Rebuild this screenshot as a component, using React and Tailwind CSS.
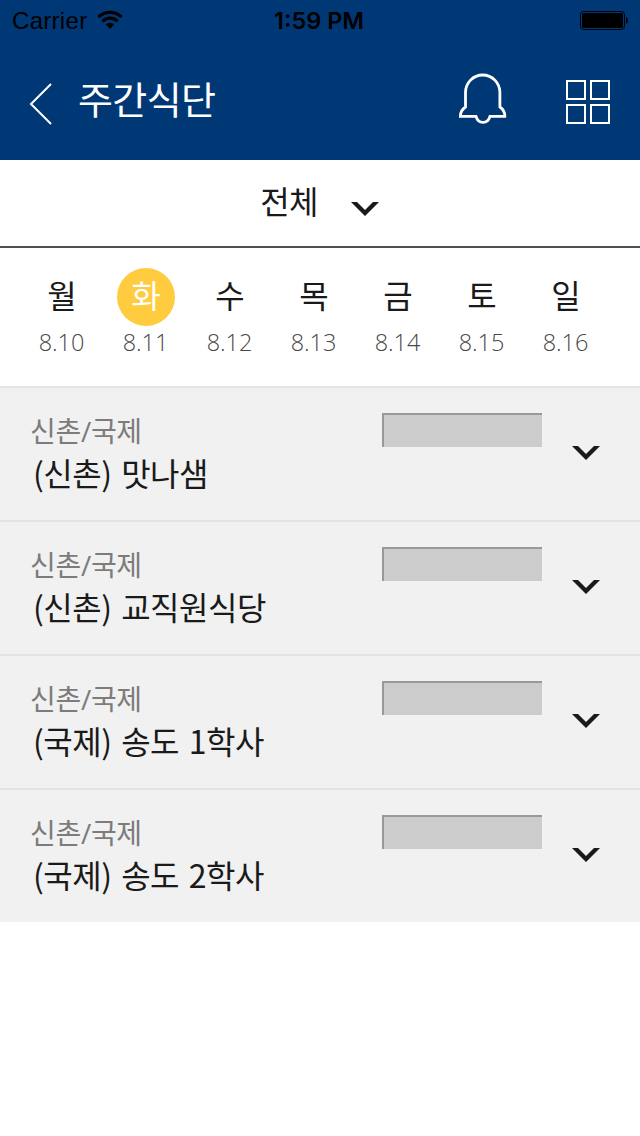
import React from "react";
import { clsx } from "clsx";

const days = [
  { name: "월", date: "8.10" },
  { name: "화", date: "8.11", active: true },
  { name: "수", date: "8.12" },
  { name: "목", date: "8.13" },
  { name: "금", date: "8.14" },
  { name: "토", date: "8.15" },
  { name: "일", date: "8.16" }
];

const restaurants = [
  { id: 1, campus: "신촌/국제", name: "(신촌) 맛나샘" },
  { id: 2, campus: "신촌/국제", name: "(신촌) 교직원식당" },
  { id: 3, campus: "신촌/국제", name: "(국제) 송도 1학사" },
  { id: 4, campus: "신촌/국제", name: "(국제) 송도 2학사" }
];

const ChevronDown = ({ className }) => (
  <svg width="28" height="14" viewBox="0 0 28 14" className={clsx("shrink-0", className)}>
    <path d="M0 0H6L14 8L22 0H28L14 14Z" fill="#1a1a1a" />
  </svg>
);

const StatusBar = () => (
  <div className="grid h-10 grid-cols-3 items-start pl-3 pr-[11px] font-['Liberation_Sans'] text-2xl/10 text-black">
    <div className="flex items-start gap-[10px]">
      <span className="mt-px tracking-[0.3px]">Carrier</span>
      <svg width="26" height="20" viewBox="0 0 26 20" className="mt-2.5">
        <g fill="none" stroke="#000" strokeWidth="3.2">
          <path d="M1.4 7.2A16.6 16.6 0 0 1 24.6 7.2" />
          <path d="M5.4 11.3A10.8 10.8 0 0 1 20.6 11.3" />
        </g>
        <path d="M8.7 14.5A6.2 6.2 0 0 1 17.3 14.5L13 18.8Z" />
      </svg>
    </div>
    <span className="mt-px pr-[3px] text-center font-['Inter'] text-[23.5px] font-semibold whitespace-nowrap">1:59 PM</span>
    <svg width="50" height="20" viewBox="0 0 50 20" className="mt-2.5 justify-self-end">
      <rect x="1.5" y="1.5" width="44" height="18" rx="3" fill="none" stroke="#000" strokeWidth="1" />
      <rect x="3" y="3" width="41" height="15" rx="1.5" />
      <path d="M47 7C49.5 7.5 49.5 13.5 47 14Z" />
    </svg>
  </div>
);

const Header = () => (
  <header className="h-40 bg-[#003876]">
    <StatusBar />
    <div className="flex h-[120px] items-start pl-[29px] pr-[30px] text-white">
      <svg width="24" height="42" viewBox="0 0 24 42" className="mt-[43px]" fill="none" stroke="currentColor" strokeWidth="2">
        <path d="M22 1L2 21L22 41" />
      </svg>
      <h1 className="ml-[25px] mt-[30px] text-[38px]/[58px] tracking-[-0.6px]">주간식단</h1>
      <svg width="48" height="52" viewBox="0 0 48 52" className="ml-auto mt-[33px]" fill="none" stroke="currentColor" strokeWidth="2.8">
        <path d="M6.5 34V19.5A17.2 17.5 0 0 1 40.9 19.5V34Q46 37.5 45.8 43.4H31C30 47 28 49.4 24 49.4S18 47 17 43.4H1.4Q1.3 37.5 6.5 34Z" />
      </svg>
      <div className="ml-[59px] mt-10 grid grid-cols-2 gap-1">
        <span className="size-5 border-2 border-white" />
        <span className="size-5 border-2 border-white" />
        <span className="size-5 border-2 border-white" />
        <span className="size-5 border-2 border-white" />
      </div>
    </div>
  </header>
);

const CampusFilter = () => (
  <div className="flex h-22 justify-center border-b-2 border-[#505050] pr-px">
    <span className="mt-[19px] text-[32px]/[46px] tracking-[-0.8px]">전체</span>
    <ChevronDown className="ml-[33px] mt-[42px]" />
  </div>
);

const Week = () => (
  <div className="grid h-[138px] grid-cols-7 pl-5 pr-8 pt-5">
    {days.map((day) => (
      <div key={day.date} className="flex flex-col items-center">
        <span
          className={clsx(
            "flex size-[58px] justify-center rounded-full text-[32px]/[56px]",
            day.active && "bg-[#ffcc40] text-white"
          )}
        >
          {day.name}
        </span>
        <span className="pr-px font-['Open_Sans'] text-[23.5px]/8 font-light tracking-[-0.1px] text-[#484848]">{day.date}</span>
      </div>
    ))}
  </div>
);

const RestaurantRow = ({ restaurant }) => (
  <li className="flex h-[134px] items-start border-t-2 border-[#e3e3e3] bg-[#f1f1f1] pl-[30px] pr-10">
    <div className="flex-1 pt-[23px]">
      <p className="text-[28px]/[40px] tracking-[-0.3px] text-[#7c7c7c]">{restaurant.campus}</p>
      <h2 className="pl-[3px] font-['Noto_Sans_CJK_KR'] text-[32px]/[42px] tracking-[-0.5px] [word-spacing:3px]">
        {restaurant.name}
      </h2>
    </div>
    <div className="mt-[25px] h-[34px] w-40 border-l-2 border-t-2 border-[#999] bg-[#ccc]" />
    <ChevronDown className="ml-[30px] mt-[58px]" />
  </li>
);

const App = () => {
  return (
    <div className="min-h-screen bg-white font-['Open_Sans','Noto_Sans_CJK_KR',sans-serif] text-[#1a1a1a]">
      <Header />
      <CampusFilter />
      <Week />
      <ul>
        {restaurants.map((restaurant) => (
          <RestaurantRow key={restaurant.id} restaurant={restaurant} />
        ))}
      </ul>
    </div>
  );
};

export default App;
